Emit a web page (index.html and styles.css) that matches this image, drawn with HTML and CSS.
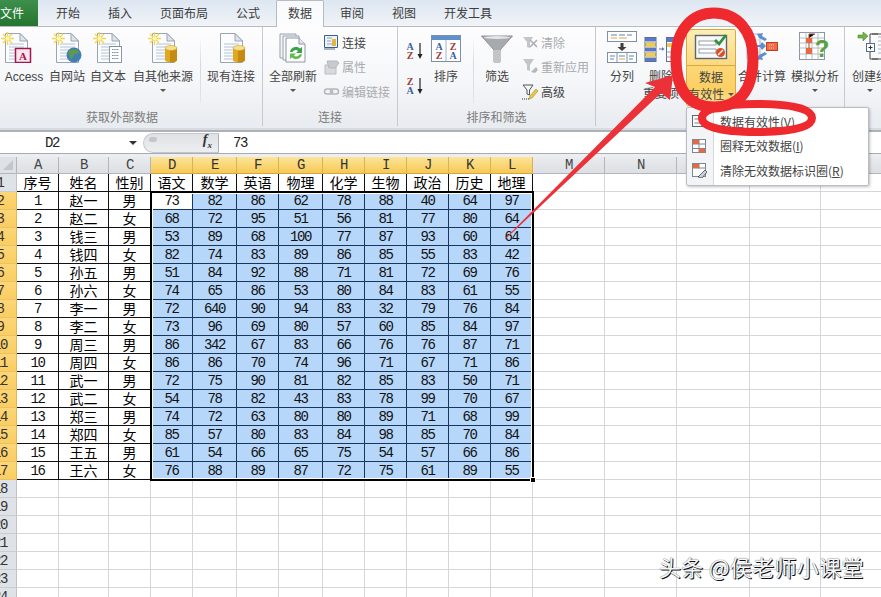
FILE: index.html
```html
<!DOCTYPE html>
<html lang="zh-CN">
<head>
<meta charset="utf-8">
<title>数据有效性</title>
<link rel="stylesheet" href="styles.css">
</head>
<body>
<svg class="defs" aria-hidden="true">
  <symbol id="page" viewBox="0 0 32 32">
    <path d="M5.5 2.5H20L27.5 10V31.5H5.5Z" fill="#fbfcfd" stroke="#9aa5b1"/>
    <path d="M20 2.5V10H27.5Z" fill="#dfe5ec" stroke="#9aa5b1"/>
    <path d="M9 13h15M9 16h15M9 19h15M9 22h15M9 25h15M9 28h15" stroke="#b3c4d8"/>
  </symbol>
  <symbol id="spark" viewBox="0 0 32 32">
    <path d="M7.5 1v13M1 7.5h13M3 3l9 9M12 3l-9 9" stroke="#f2d64b" stroke-width="1.3"/>
    <circle cx="7.5" cy="7.5" r="2" fill="#fff6b8"/>
  </symbol>
  <symbol id="db" viewBox="0 0 32 32">
    <path d="M18 17v12c0 3 12 3 12 0V17Z" fill="#e0a81f"/>
    <path d="M23 17h7v12c0 1.500-3 2.400-7 2.500Z" fill="#c58a12"/>
    <ellipse cx="24" cy="17" rx="6" ry="2.500" fill="#f7df8a" stroke="#d0a02a" stroke-width=".6"/>
  </symbol>
</svg>

<div class="app">
  <nav class="tabs">
    <span class="tab file">文件</span>
    <span class="tab">开始</span>
    <span class="tab">插入</span>
    <span class="tab">页面布局</span>
    <span class="tab">公式</span>
    <span class="tab active">数据</span>
    <span class="tab">审阅</span>
    <span class="tab">视图</span>
    <span class="tab">开发工具</span>
  </nav>

  <section class="ribbon">
    <div class="group g1">
      <div class="controls">
        <div class="btn w48">
          <svg class="ico start" width="32" height="32"><use href="#page"/><use href="#spark"/>
            <rect x="15.500" y="17.500" width="15" height="14" fill="#fbe6ee" stroke="#a3174e" stroke-width="1.500"/>
            <text x="23" y="29" class="ic-a">A</text></svg>
          <span class="lab latin">Access</span>
        </div>
        <div class="btn w38">
          <svg class="ico" width="32" height="32"><use href="#page"/><use href="#spark"/>
            <circle cx="23" cy="24" r="7.500" fill="#3f7fb5"/>
            <path d="M18 20c3-3 6 0 8-2l2 3c-2 3-3 1-5 3s-1 4-3 4c-1-3-3-5-2-8Z" fill="#5f9a4a"/></svg>
          <span class="lab">自网站</span>
        </div>
        <div class="btn w44">
          <svg class="ico" width="32" height="32"><use href="#page"/><use href="#spark"/>
            <rect x="17.500" y="15.500" width="12" height="16" fill="#fff" stroke="#8d98a5"/>
            <path d="M17.500 15.500h12M20 18.500h7M20 21.500h7M20 24.500h7M20 27.500h7" stroke="#7e8a97" stroke-dasharray="1.500 .7"/></svg>
          <span class="lab">自文本</span>
        </div>
        <div class="btn w66">
          <svg class="ico" width="32" height="32"><use href="#page"/><use href="#spark"/><use href="#db"/></svg>
          <span class="lab">自其他来源</span>
          <i class="caret"></i>
        </div>
        <i class="sep s-a"></i>
        <div class="btn w54">
          <svg class="ico" width="32" height="32"><use href="#page"/><use href="#db"/></svg>
          <span class="lab">现有连接</span>
        </div>
      </div>
      <div class="glabel shift">获取外部数据</div>
    </div>

    <div class="group g2">
      <div class="controls">
        <div class="btn w60">
          <svg class="ico" width="32" height="32">
            <path d="M3 3h16v24H3Z" fill="#f3f5f8" stroke="#98a2ae"/>
            <path d="M6 5h16v24H6Z" fill="#f7f8fa" stroke="#98a2ae"/>
            <path d="M9 7h13l6 6v18H9Z" fill="#fff" stroke="#8d98a5"/>
            <path d="M22 7v6h6" fill="#e4e9ef" stroke="#8d98a5"/>
            <path d="M13 21a6 6 0 0 1 10-3.500l2-1.500v6h-6l2-2a3.500 3.500 0 0 0-5.500 1Z" fill="#3aa34a"/>
            <path d="M25 23a6 6 0 0 1-10 3.500l-2 1.500v-5.500h6l-2 2a3.500 3.500 0 0 0 5.500-1Z" fill="#62bb4c"/>
          </svg>
          <span class="lab">全部刷新</span>
          <i class="caret"></i>
        </div>
        <div class="small">
          <div class="row">
            <svg class="sic" width="17" height="17"><path d="M1.500 1.500h13v12h-13Z" fill="#eef3f9" stroke="#3d5f86"/><path d="M4 4h5M4 7h4M4 10h5" stroke="#8ba3bf"/><path d="M9 5h4v7H9Z" fill="#e6b441"/><path d="M1 15h11" stroke="#55708f"/></svg>
            <span>连接</span>
          </div>
          <div class="row off">
            <svg class="sic" width="17" height="17"><path d="M2 7h11v9H2Z" fill="#d8dadd" stroke="#b9bcc0"/><path d="M4 3h10l2 2-4 5H6Z" fill="#c8cace" stroke="#b5b8bc"/></svg>
            <span>属性</span>
          </div>
          <div class="row off">
            <svg class="sic" width="17" height="17"><rect x="1.500" y="6" width="8" height="5" rx="2.500" fill="none" stroke="#b4b7bb" stroke-width="1.500"/><rect x="7.500" y="6" width="8" height="5" rx="2.500" fill="none" stroke="#b4b7bb" stroke-width="1.500"/></svg>
            <span>编辑链接</span>
          </div>
        </div>
      </div>
      <div class="glabel">连接</div>
    </div>

    <div class="group g3">
      <div class="controls">
        <div class="sorts">
          <svg width="18" height="18"><text x="5" y="8" class="ic-s blue">A</text><text x="5" y="16.500" class="ic-s red">Z</text><path d="M15 1v13" stroke="#222" stroke-width="1.200"/><path d="M12.500 12h5L15 17Z" fill="#222"/></svg>
          <svg width="18" height="18"><text x="5" y="8" class="ic-s red">Z</text><text x="5" y="16.500" class="ic-s blue">A</text><path d="M15 1v13" stroke="#222" stroke-width="1.200"/><path d="M12.500 12h5L15 17Z" fill="#222"/></svg>
        </div>
        <div class="btn w42">
          <svg class="ico low" width="30" height="28">
            <rect x=".5" y=".5" width="29" height="26" fill="#fff" stroke="#7b8fa8"/>
            <rect x="1" y="1" width="28" height="4" fill="#5f8fcf"/>
            <path d="M15 5v21" stroke="#9fb2c7"/>
            <text x="8" y="15" class="ic-s blue">A</text><text x="8" y="24" class="ic-s red">Z</text>
            <text x="22" y="15" class="ic-s red">Z</text><text x="22" y="24" class="ic-s blue">A</text>
          </svg>
          <span class="lab">排序</span>
        </div>
        <i class="sep s-b"></i>
        <div class="btn w38">
          <svg class="ico low" width="32" height="28">
            <path d="M.5 1h31L19 15v12h-6V15Z" fill="#a8abae" stroke="#8d9094"/>
            <path d="M13 15h6v12h-6Z" fill="#c2c4c6"/>
            <ellipse cx="16" cy="2.500" rx="13" ry="1.500" fill="#e4e5e7"/>
          </svg>
          <span class="lab">筛选</span>
        </div>
        <div class="small sm-f">
          <div class="row off">
            <svg class="sic" width="17" height="17"><path d="M1 3h10l-3 5v6l-3-1V8Z" fill="#c3c5c9"/><path d="M8 6l7 7M15 6l-7 7" stroke="#adb0b4" stroke-width="1.700"/></svg>
            <span>清除</span>
          </div>
          <div class="row off">
            <svg class="sic" width="17" height="17"><path d="M1 1h11L8 7v6L5 12V7Z" fill="#c3c5c9"/><path d="M9 14l5-5 2 3-3 3Z" fill="#b4b7bb"/></svg>
            <span>重新应用</span>
          </div>
          <div class="row">
            <svg class="sic" width="17" height="17"><path d="M1 2h10L7.500 7v5L5 11V7Z" fill="none" stroke="#555"/><path d="M8 13l6-7 2 2-6 7-3 1Z" fill="#e6c64c" stroke="#a78a25" stroke-width=".6"/><path d="M0 16h7" stroke="#333" stroke-dasharray="1 1"/></svg>
            <span>高级</span>
          </div>
        </div>
      </div>
      <div class="glabel">排序和筛选</div>
    </div>

    <div class="group g4">
      <div class="controls">
        <div class="btn w36">
          <svg class="ico" width="32" height="32">
            <rect x="1.500" y=".5" width="29" height="10" fill="#fff" stroke="#7f90a5"/>
            <path d="M5 4h6M13 4h6M21 4h5" stroke="#5a83b8"/><path d="M5 7h6M13 7h8" stroke="#e5a33b"/>
            <path d="M14.500 12h3v4h3l-4.500 4-4.500-4h3Z" fill="#3d3d3d"/>
            <rect x="1.500" y="21.500" width="29" height="10" fill="#fff" stroke="#7f90a5"/>
            <path d="M11 22v9M21 22v9" stroke="#7f90a5"/>
            <path d="M4 25h5M4 28h4M13 25h6M23 25h5M23 28h4" stroke="#5a83b8"/><path d="M13 28h6" stroke="#e5a33b"/>
          </svg>
          <span class="lab">分列</span>
        </div>
        <div class="btn w42">
          <svg class="ico lowa" width="34" height="26">
            <rect x="1" y=".5" width="11" height="24" fill="#5c79c9" stroke="#5a6f99"/>
            <path d="M1 5h11M1 10h11M1 15h11M1 20h11" stroke="#fff"/>
            <rect x="1.500" y="5.500" width="10" height="4.500" fill="#f1cd4f"/>
            <rect x="1.500" y="15.500" width="10" height="4.500" fill="#f1cd4f"/>
            <path d="M15 12h3" stroke="#5c79c9"/><path d="M18 10l2.500 2-2.500 2Z" fill="#5c79c9"/>
            <rect x="22.500" y=".5" width="11" height="24" fill="#fff" stroke="#5a6f99"/>
            <rect x="23" y="1" width="10" height="4" fill="#5c79c9"/><rect x="23" y="6" width="10" height="4" fill="#f1cd4f"/>
            <path d="M22.500 15h11M22.500 20h11M28 10v15" stroke="#8f9cb8"/>
          </svg>
          <span class="lab">删除</span>
          <span class="lab line2">重复项</span>
        </div>
        <div class="dv">
          <div class="dv-top">
            <svg width="34" height="26">
              <rect x="1.500" y="1.500" width="31" height="23" fill="#f7f8f9" stroke="#5f6670" stroke-width="1.400"/>
              <rect x="5" y="7" width="17" height="4" fill="#fff" stroke="#7d8693" stroke-width=".8"/>
              <rect x="5" y="15" width="17" height="4" fill="#fff" stroke="#7d8693" stroke-width=".8"/>
              <path d="M21 6l4 4 7-9" fill="none" stroke="#2f8f3c" stroke-width="2.800"/>
              <circle cx="26.500" cy="18.500" r="4.500" fill="#d94d2a"/>
              <path d="M24 21l5-5" stroke="#fff" stroke-width="1.300"/>
            </svg>
          </div>
          <div class="dv-bottom">
            <span class="lab">数据</span>
            <span class="lab line2">有效性 <i class="caret inline"></i></span>
          </div>
        </div>
        <div class="btn w48 ml2">
          <svg class="ico" width="32" height="32">
            <path d="M1 3h13v25H1Z" fill="#f6f8fa" stroke="#aab4c0"/>
            <path d="M1 9h13M1 15h13M1 21h13M7 3v25" stroke="#cdd5de"/>
            <path d="M11 3l6-1-1 3 5 3-2 2-6-3Z" fill="#5b8fd1"/>
            <path d="M10 14h4l2-3 4 4-4 4-2-3h-4Z" fill="#5b8fd1"/>
            <path d="M11 28l6 1-1-3 5-3-2-2-6 3Z" fill="#5b8fd1"/>
            <rect x="20.500" y="11.500" width="11" height="8" fill="#ef6a45" stroke="#c43f22"/>
            <path d="M23 14h6M23 17h6" stroke="#ffd2c2" stroke-dasharray="1 1"/>
          </svg>
          <span class="lab">合并计算</span>
        </div>
        <div class="btn w50 ml4">
          <svg class="ico" width="32" height="32">
            <rect x=".5" y="1.500" width="25" height="27" fill="#fff" stroke="#8b97a6"/>
            <path d="M.5 7h25M.5 12h25M.5 17h25M.5 23h25M7 1.500v27M13 1.500v27M19 1.500v27" stroke="#b3bcc7"/>
            <rect x="7" y="7" width="6" height="5" fill="#e8683f"/>
            <rect x="7" y="17" width="6" height="6" fill="#e8683f"/>
            <path d="M10 7V3h6M10 17v-5" stroke="#a34a2a"/>
            <text x="23" y="26" class="ic-q">?</text>
          </svg>
          <span class="lab">模拟分析</span>
          <i class="caret"></i>
        </div>
      </div>
      <div class="glabel">数据工具</div>
    </div>

    <div class="group g5">
      <div class="controls">
        <div class="btn w36 mlg">
          <svg class="ico" width="32" height="32">
            <path d="M4 4h5V1l5 4-5 5V7H4Z" fill="#72b347" stroke="#4f8a2c" stroke-width=".6"/>
            <path d="M24 3h-8v9M16 20v8h8M18 3h14M18 28h14" fill="none" stroke="#444"/>
            <rect x="12.500" y="12.500" width="8" height="8" fill="#fff" stroke="#4b6e9b"/>
            <path d="M14.500 16.500h4M16.500 14.500v4" stroke="#333"/>
            <path d="M24 6h8M24 10h8M24 14h8M24 18h8M24 22h8" stroke="#a9b5c3"/>
          </svg>
          <span class="lab nowrap">创建组</span>
          <i class="caret"></i>
        </div>
      </div>
    </div>
  </section>

  <div class="formula">
    <div class="namebox"><span>D2</span><i class="caret dark"></i></div>
    <div class="pill"><i class="pill-dot"></i><span class="fx">f<sub>x</sub></span></div>
    <div class="fvalue">73</div>
  </div>

  <main class="sheet">
    <table class="grid">
      <colgroup>
        <col class="c-rh"><col class="c-42"><col class="c-50"><col class="c-42"><col class="c-42"><col class="c-44"><col class="c-42"><col class="c-44"><col class="c-42"><col class="c-42"><col class="c-42"><col class="c-42"><col class="c-42"><col class="c-72"><col class="c-72"><col class="c-73"><col class="c-71"><col class="c-72">
      </colgroup>
      <thead>
        <tr>
          <th class="corner"><svg width="12" height="12" class="tri"><path d="M11 1v10H1Z" fill="#c3c7cd"/></svg></th>
          <th>A</th><th>B</th><th>C</th>
          <th class="on">D</th><th class="on">E</th><th class="on">F</th><th class="on">G</th><th class="on">H</th><th class="on">I</th><th class="on">J</th><th class="on">K</th><th class="on">L</th>
          <th>M</th><th>N</th><th>O</th><th>P</th><th>Q</th>
        </tr>
      </thead>
      <tbody>
        <tr class="head"><th>1</th><td class="t">序号</td><td class="t">姓名</td><td class="t">性别</td><td class="t">语文</td><td class="t">数学</td><td class="t">英语</td><td class="t">物理</td><td class="t">化学</td><td class="t">生物</td><td class="t">政治</td><td class="t">历史</td><td class="t">地理</td><td class="e"></td><td class="e"></td><td class="e"></td><td class="e"></td><td class="e"></td></tr>
        <tr class="d"><th>2</th><td>1</td><td class="t">赵一</td><td class="t">男</td><td class="act">73</td><td>82</td><td>86</td><td>62</td><td>78</td><td>88</td><td>40</td><td>64</td><td>97</td><td class="e"></td><td class="e"></td><td class="e"></td><td class="e"></td><td class="e"></td></tr>
        <tr class="d"><th>3</th><td>2</td><td class="t">赵二</td><td class="t">女</td><td>68</td><td>72</td><td>95</td><td>51</td><td>56</td><td>81</td><td>77</td><td>80</td><td>64</td><td class="e"></td><td class="e"></td><td class="e"></td><td class="e"></td><td class="e"></td></tr>
        <tr class="d"><th>4</th><td>3</td><td class="t">钱三</td><td class="t">男</td><td>53</td><td>89</td><td>68</td><td>100</td><td>77</td><td>87</td><td>93</td><td>60</td><td>64</td><td class="e"></td><td class="e"></td><td class="e"></td><td class="e"></td><td class="e"></td></tr>
        <tr class="d"><th>5</th><td>4</td><td class="t">钱四</td><td class="t">女</td><td>82</td><td>74</td><td>83</td><td>89</td><td>86</td><td>85</td><td>55</td><td>83</td><td>42</td><td class="e"></td><td class="e"></td><td class="e"></td><td class="e"></td><td class="e"></td></tr>
        <tr class="d"><th>6</th><td>5</td><td class="t">孙五</td><td class="t">男</td><td>51</td><td>84</td><td>92</td><td>88</td><td>71</td><td>81</td><td>72</td><td>69</td><td>76</td><td class="e"></td><td class="e"></td><td class="e"></td><td class="e"></td><td class="e"></td></tr>
        <tr class="d"><th>7</th><td>6</td><td class="t">孙六</td><td class="t">女</td><td>74</td><td>65</td><td>86</td><td>53</td><td>80</td><td>84</td><td>83</td><td>61</td><td>55</td><td class="e"></td><td class="e"></td><td class="e"></td><td class="e"></td><td class="e"></td></tr>
        <tr class="d"><th>8</th><td>7</td><td class="t">李一</td><td class="t">男</td><td>72</td><td>640</td><td>90</td><td>94</td><td>83</td><td>32</td><td>79</td><td>76</td><td>84</td><td class="e"></td><td class="e"></td><td class="e"></td><td class="e"></td><td class="e"></td></tr>
        <tr class="d"><th>9</th><td>8</td><td class="t">李二</td><td class="t">女</td><td>73</td><td>96</td><td>69</td><td>80</td><td>57</td><td>60</td><td>85</td><td>84</td><td>97</td><td class="e"></td><td class="e"></td><td class="e"></td><td class="e"></td><td class="e"></td></tr>
        <tr class="d"><th>10</th><td>9</td><td class="t">周三</td><td class="t">男</td><td>86</td><td>342</td><td>67</td><td>83</td><td>66</td><td>76</td><td>76</td><td>87</td><td>71</td><td class="e"></td><td class="e"></td><td class="e"></td><td class="e"></td><td class="e"></td></tr>
        <tr class="d"><th>11</th><td>10</td><td class="t">周四</td><td class="t">女</td><td>86</td><td>86</td><td>70</td><td>74</td><td>96</td><td>71</td><td>67</td><td>71</td><td>86</td><td class="e"></td><td class="e"></td><td class="e"></td><td class="e"></td><td class="e"></td></tr>
        <tr class="d"><th>12</th><td>11</td><td class="t">武一</td><td class="t">男</td><td>72</td><td>75</td><td>90</td><td>81</td><td>82</td><td>85</td><td>83</td><td>50</td><td>71</td><td class="e"></td><td class="e"></td><td class="e"></td><td class="e"></td><td class="e"></td></tr>
        <tr class="d"><th>13</th><td>12</td><td class="t">武二</td><td class="t">女</td><td>54</td><td>78</td><td>82</td><td>43</td><td>83</td><td>78</td><td>99</td><td>70</td><td>67</td><td class="e"></td><td class="e"></td><td class="e"></td><td class="e"></td><td class="e"></td></tr>
        <tr class="d"><th>14</th><td>13</td><td class="t">郑三</td><td class="t">男</td><td>74</td><td>72</td><td>63</td><td>80</td><td>80</td><td>89</td><td>71</td><td>68</td><td>99</td><td class="e"></td><td class="e"></td><td class="e"></td><td class="e"></td><td class="e"></td></tr>
        <tr class="d"><th>15</th><td>14</td><td class="t">郑四</td><td class="t">女</td><td>85</td><td>57</td><td>80</td><td>83</td><td>84</td><td>98</td><td>85</td><td>70</td><td>84</td><td class="e"></td><td class="e"></td><td class="e"></td><td class="e"></td><td class="e"></td></tr>
        <tr class="d"><th>16</th><td>15</td><td class="t">王五</td><td class="t">男</td><td>61</td><td>54</td><td>66</td><td>65</td><td>75</td><td>54</td><td>57</td><td>66</td><td>86</td><td class="e"></td><td class="e"></td><td class="e"></td><td class="e"></td><td class="e"></td></tr>
        <tr class="d"><th>17</th><td>16</td><td class="t">王六</td><td class="t">女</td><td>76</td><td>88</td><td>89</td><td>87</td><td>72</td><td>75</td><td>61</td><td>89</td><td>55</td><td class="e"></td><td class="e"></td><td class="e"></td><td class="e"></td><td class="e"></td></tr>
        <tr class="blank"><th>18</th><td colspan="17" class="fill"></td></tr>
        <tr class="blank"><th>19</th><td colspan="17" class="fill"></td></tr>
        <tr class="blank"><th>20</th><td colspan="17" class="fill"></td></tr>
        <tr class="blank"><th>21</th><td colspan="17" class="fill"></td></tr>
        <tr class="blank"><th>22</th><td colspan="17" class="fill"></td></tr>
        <tr class="blank"><th>23</th><td colspan="17" class="fill"></td></tr>
        <tr class="blank"><th>24</th><td colspan="17" class="fill"></td></tr>
      </tbody>
    </table>
    <div class="selection"><i class="handle"></i></div>
  </main>

  <div class="menu">
    <div class="mitem">
      <svg class="mic" width="16" height="16"><rect x="1.500" y="2.500" width="13" height="11" fill="#f7f8f9" stroke="#5f6670"/><path d="M3.500 6h7M3.500 10h7" stroke="#7d8693"/></svg>
      <span>数据有效性(<u>V</u>)<span class="dots">...</span></span>
    </div>
    <div class="mitem">
      <svg class="mic" width="16" height="16"><rect x="1.500" y="1.500" width="13" height="13" fill="#fff" stroke="#7d8693"/><path d="M1.500 6h13M1.500 10.500h13M8 1.500v13" stroke="#7d8693"/><rect x="2" y="2" width="6" height="4" fill="#e8683f"/><rect x="8" y="10.500" width="6" height="4" fill="#e8683f"/></svg>
      <span>圈释无效数据(<u>I</u>)</span>
    </div>
    <div class="mitem">
      <svg class="mic" width="16" height="16"><rect x="1.500" y="1.500" width="13" height="13" fill="#fff" stroke="#7d8693"/><path d="M1.500 6h13M8 1.500v5" stroke="#7d8693"/><rect x="2" y="2" width="6" height="4" fill="#e8683f"/><path d="M7 15l7-7 2 2-5 6Z" fill="#c7d3e4" stroke="#333" stroke-width=".7"/></svg>
      <span>清除无效数据标识圈(<u>R</u>)</span>
    </div>
  </div>

  <svg class="marks" width="881" height="597" aria-hidden="true">
    <path d="M714 13C738 13 753 32 753 58C753 92 738 107 714 107C690 107 676 92 676 58C676 30 692 13 714 13Z" class="ring r-a"/>
    <path d="M757 104C790 104 812 108 812 118C812 128 790 132 757 132C725 132 702 128 702 118C702 108 725 104 757 104Z" class="ring r-b"/>
    <path d="M505 238.500 655 87 645 83 673 75 670 100 661 93 505.500 239Z" class="arrow"/>
  </svg>

  <div class="watermark">头条 @侯老师小课堂</div>
</div>
</body>
</html>
```
FILE: styles.css
```css
* { box-sizing: border-box; }
html, body { margin: 0; padding: 0; }
body { width: 881px; height: 597px; overflow: hidden; background: #fff; font-family: "Noto Sans CJK SC", "Liberation Sans", sans-serif; font-size: 12px; color: #444; }
.defs { position: absolute; width: 0; height: 0; }
.app { position: relative; width: 881px; height: 597px; overflow: hidden; }

/* tabs */
.tabs { display: flex; gap: 4px; height: 27px; background: linear-gradient(#dde6f1, #f1f4f8); border-bottom: 1px solid #b7bbc1; }
.tab { height: 26px; line-height: 26px; padding: 0 12px; color: #3c3c3c; white-space: nowrap; }
.tab.file { width: 38px; padding: 0; margin-right: 2px; background: linear-gradient(#3f8f4c, #23752f); color: #fff; }
.tab.active { height: 27px; background: linear-gradient(#f7f9fb, #fdfdfe); border: 1px solid #b7bbc1; border-bottom: 0; border-radius: 2px 2px 0 0; padding: 0 11px; line-height: 24px; }

/* ribbon */
.ribbon { display: flex; height: 105px; background: linear-gradient(#fdfdfe 0, #f6f7f9 50%, #e9ecf0 97px); border-bottom: 2px solid #aeb2b8; box-shadow: inset 0 -2px 0 #d8dbdf; }
.group { display: flex; flex-direction: column; flex: none; height: 99px; border-right: 1px solid #c6cad0; position: relative; }
.g1 { width: 263px; }
.g2 { width: 135px; }
.g3 { width: 198px; }
.g4 { width: 249px; padding-left: 8px; }
.g5 { width: 37px; border-right: 0; overflow: hidden; }
.controls { display: flex; height: 81px; flex: none; }
.glabel { height: 18px; line-height: 18px; text-align: center; color: #7b7b7b; white-space: nowrap; }
.glabel.shift { padding-right: 18px; }

.btn { display: flex; flex-direction: column; align-items: center; padding-top: 4px; flex: none; }
.w36 { width: 36px; } .w38 { width: 38px; } .w42 { width: 42px; } .w44 { width: 44px; } .w48 { width: 48px; }
.w50 { width: 50px; } .w54 { width: 54px; } .w60 { width: 60px; } .w66 { width: 66px; }
.ml2 { margin-left: 2px; } .ml4 { margin-left: 4px; } .mlg { margin-left: 7px; }
.ico { display: block; flex: none; }
.ico.start { align-self: flex-start; }
.ico.low { margin-top: 4px; margin-bottom: 0; }
.ico.lowa { margin-top: 6px; }
.g3 .lab { margin-top: 4px; }
.g3 .ico.low { height: 28px; }
.lab { display: block; height: 17px; line-height: 17px; margin-top: 4px; white-space: nowrap; color: #444; }
.lab.line2 { margin-top: 0; }
.lab.latin { font-family: "Liberation Sans", sans-serif; line-height: 20px; }
.nowrap { white-space: nowrap; }
.caret { display: block; width: 0; height: 0; margin-top: 5px; border: 3px solid transparent; border-top: 3px solid #555; border-bottom: 0; }
.caret.inline { display: inline-block; margin: 0 0 2px 1px; vertical-align: middle; }
.caret.dark { border-width: 4px 4px 0; border-top-color: #333; margin: 0; }
.sep { display: block; width: 1px; flex: none; margin-top: 14px; height: 62px; background: linear-gradient(#f4f5f7, #d5d8dd 40%, #e2e5e9); }
.s-a { margin-left: 4px; margin-right: 3px; }
.s-b { margin-left: 6px; margin-right: 4px; }

.small { display: flex; flex-direction: column; padding-top: 3px; flex: none; }
.row { display: flex; align-items: center; height: 24.5px; white-space: nowrap; color: #444; }
.row.off { color: #a9abae; }
.sic { flex: none; margin-right: 2px; }
.sm-f { margin-left: 6px; }

.sorts { display: flex; flex-direction: column; width: 27px; padding: 15px 0 0 7px; gap: 17px; flex: none; }

.dv { width: 50px; height: 77px; margin: 2px 0 0 4px; flex: none; border: 1px solid #d9a83f; border-radius: 2px; display: flex; flex-direction: column; align-items: center; }
.dv-top { width: 100%; height: 36px; padding-top: 4px; display: flex; justify-content: center; background: linear-gradient(#fdeeb4, #fbd97f); border-bottom: 1px solid #d9a83f; }
.dv-bottom { flex: 1; width: 100%; display: flex; flex-direction: column; align-items: center; background: linear-gradient(#fdd777, #fbcf62 60%, #fde39a); }
.dv-bottom .lab { margin-top: 2px; }
.dv-bottom .lab.line2 { margin-top: 0; }

/* formula bar */
.formula { display: flex; align-items: center; height: 22px; background: #fff; border-bottom: 1px solid #a8acb2; }
.namebox { position: relative; display: flex; align-items: center; justify-content: space-between; width: 143px; padding: 0 6px 0 45px; font-family: "Liberation Mono", monospace; font-size: 14px; letter-spacing: -1.400px; color: #222; flex: none; }
.pill { display: flex; align-items: center; justify-content: space-between; width: 76px; height: 20px; padding: 0 6px 0 5px; background: linear-gradient(#dfe1e5, #eceef0); border: 1px solid #c4c8cd; border-right: 1px solid #aeb2b8; border-radius: 10px 0 0 10px; flex: none; }
.pill-dot { display: block; width: 8px; height: 5px; margin-bottom: 6px; border-radius: 3px; background: #c3c6cb; }
.fx { font-family: "Liberation Serif", serif; font-style: italic; font-weight: 700; font-size: 14px; color: #333; line-height: 18px; }
.fx sub { font-size: 9px; }
.fvalue { padding-left: 14px; font-family: "Liberation Mono", monospace; font-size: 14px; letter-spacing: -1.400px; color: #222; }

/* sheet */
.sheet { position: relative; height: 444px; padding-top: 3px; overflow: hidden; background: #eceef1; }
.grid { table-layout: fixed; width: 909px; margin-left: -16px; border-collapse: separate; border-spacing: 0; background: #fff; font-family: "Liberation Mono", monospace; font-size: 14px; color: #111; letter-spacing: -1.400px; }
.c-rh { width: 33px; } .c-42 { width: 42px; } .c-44 { width: 44px; } .c-50 { width: 50px; }
.c-71 { width: 71px; } .c-72 { width: 72px; } .c-73 { width: 73px; }
.grid th, .grid td { padding: 0; overflow: hidden; text-align: center; font-weight: 400; line-height: 16px; }
thead th { height: 17px; background: linear-gradient(#e9ebee, #dcdfe3); border-right: 1px solid #b2b6bc; border-bottom: 1px solid #b2b6bc; color: #444; vertical-align: middle; }
thead th.on { background: linear-gradient(#fce59a, #f7c955); border-right-color: #dcb152; border-bottom-color: #d6a63f; color: #333; }
thead th.corner { background: #dee1e5; text-align: right; padding-right: 2px; }
.tri { display: block; margin-left: auto; }
tbody th { height: 18px; vertical-align: bottom; color: #333; background: #dfe2e7; border-right: 1px solid #c0c4ca; border-bottom: 1px solid #c9ccd1; }
tr.d th { background: linear-gradient(#fcd677, #fbcd62); border-right-color: #e2b652; border-bottom-color: #e9c267; }
tbody td { height: 18px; vertical-align: bottom; border-right: 1px solid #111; border-bottom: 1px solid #111; }
td.t { font-family: "Noto Sans CJK SC", sans-serif; letter-spacing: 0; line-height: 17px; color: #000; }
tr.d td:nth-child(n+5):not(.e):not(.act) { background: #b6d7fa; border-color: #17375c; }
td.act { background: #fff; border-color: #17375c; }
td.e { border-right-color: #d4d6d9; border-bottom-color: #d4d6d9; }
td.fill { border: 0; border-bottom: 1px solid #d4d6d9; background-image: linear-gradient(#d4d6d9, #d4d6d9), linear-gradient(#d4d6d9, #d4d6d9), linear-gradient(#d4d6d9, #d4d6d9), linear-gradient(#d4d6d9, #d4d6d9), linear-gradient(#d4d6d9, #d4d6d9), linear-gradient(#d4d6d9, #d4d6d9), linear-gradient(#d4d6d9, #d4d6d9), linear-gradient(#d4d6d9, #d4d6d9), linear-gradient(#d4d6d9, #d4d6d9), linear-gradient(#d4d6d9, #d4d6d9), linear-gradient(#d4d6d9, #d4d6d9), linear-gradient(#d4d6d9, #d4d6d9), linear-gradient(#d4d6d9, #d4d6d9), linear-gradient(#d4d6d9, #d4d6d9), linear-gradient(#d4d6d9, #d4d6d9), linear-gradient(#d4d6d9, #d4d6d9); background-size: 1px 100%; background-repeat: no-repeat; background-position: 41px 0, 91px 0, 133px 0, 175px 0, 219px 0, 261px 0, 305px 0, 347px 0, 389px 0, 431px 0, 473px 0, 515px 0, 587px 0, 659px 0, 732px 0, 803px 0; }

.selection { position: absolute; left: 150px; top: 37px; width: 384px; height: 290px; border: 2px solid #000; box-shadow: inset 0 0 0 1px #fff; pointer-events: none; }
.handle { position: absolute; right: -4px; bottom: -4px; width: 6px; height: 6px; background: #000; border: 1px solid #fff; }

/* dropdown menu */
.menu { position: absolute; left: 686px; top: 107px; width: 183px; height: 79px; padding: 1px 0; background: linear-gradient(90deg, #f3f4f6 0, #f3f4f6 26px, #d5d8dc 26px, #d5d8dc 27px, #fff 27px); border: 1px solid #b9bdc3; border-radius: 2px; box-shadow: 1px 1px 3px rgba(0, 0, 0, .25); }
.mitem { display: flex; align-items: center; height: 24.5px; padding-left: 4px; color: #444; white-space: nowrap; }
.mic { flex: none; margin-right: 13px; }
.dots { letter-spacing: 1.500px; }

/* annotations */
.marks { position: absolute; left: 0; top: 0; pointer-events: none; }
.ring { fill: none; stroke: #ee2a2e; }
.r-a { stroke-width: 11; }
.r-b { stroke-width: 8; }
.arrow { fill: #ea3238; }

.watermark { position: absolute; left: 659px; top: 550px; font-size: 22px; line-height: 32px; font-weight: 400; letter-spacing: .3px; color: #f7f7f7; text-shadow: 1px 1px 0 #111, 0 0 1px #333; white-space: nowrap; }

/* icon text */
.ic-a { font: 700 11px "Liberation Serif", serif; fill: #a3174e; text-anchor: middle; }
.ic-s { font: 700 10px "Liberation Serif", serif; text-anchor: middle; letter-spacing: 0; }
.ic-q { font: 700 24px "Liberation Sans", sans-serif; fill: #5aa33c; text-anchor: middle; }
.blue { fill: #3a5f9e; }
.red { fill: #a03a3a; }
```
